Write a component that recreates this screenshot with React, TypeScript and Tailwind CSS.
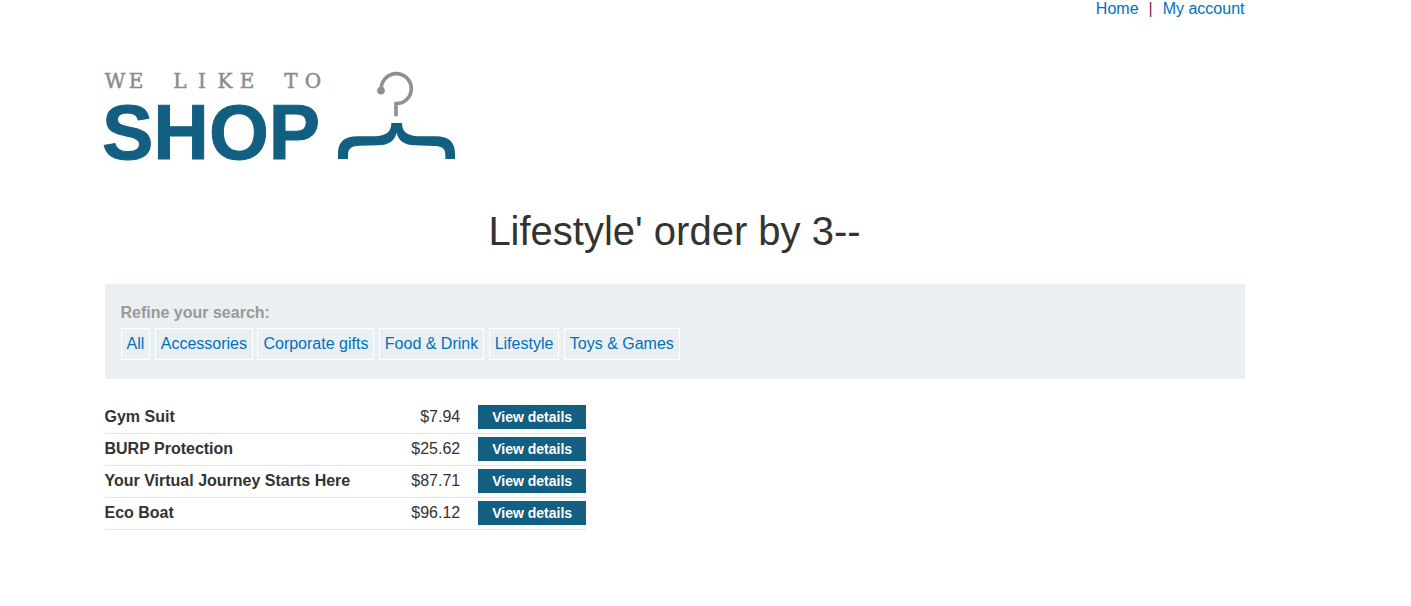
interface Product {
  name: string;
  price: string;
}

const categories = ["All", "Accessories", "Corporate gifts", "Food & Drink", "Lifestyle", "Toys & Games"];

const products: Product[] = [
  { name: "Gym Suit", price: "$7.94" },
  { name: "BURP Protection", price: "$25.62" },
  { name: "Your Virtual Journey Starts Here", price: "$87.71" },
  { name: "Eco Boat", price: "$96.12" },
];

function Logo() {
  return (
    <svg width="352" height="92" viewBox="0 0 352 92" overflow="visible" role="img" aria-label="We like to shop">
      <text
        x="10 31 75 97 120 142 186 208"
        y="18"
        textAnchor="middle"
        fontFamily="'DejaVu Serif', serif"
        fontSize="20"
        fill="#8c8c8c"
        stroke="#8c8c8c"
        strokeWidth="0.5"
      >
        WELIKETO
      </text>
      <text
        x="-3"
        y="89"
        fontFamily="'Liberation Sans', Arial, sans-serif"
        fontSize="77"
        fontWeight="bold"
        fill="#125f82"
        stroke="#125f82"
        strokeWidth="1"
      >
        SHOP
      </text>
      <g transform="translate(220 -10) scale(0.33333)">
        <path d="M169 90A45 45 0 1 1 213 131V169" fill="none" stroke="#8f9091" strokeWidth="11" />
        <circle cx="168" cy="92" r="11.5" fill="#8f9091" />
        <path
          d="M39 297V280C39 245 60 229 97 229H140C178 229 199 220 199 189H231C231 220 252 229 290 229H332C369 229 390 245 390 280V297H361V285C361 264 350 258 325 258L270 256C238 255 220 242 215 218C209 242 192 255 160 256L105 257C80 258 69 264 69 285V297Z"
          fill="#125f82"
        />
      </g>
    </svg>
  );
}

export default function App() {
  return (
    <div className="bg-white pr-[62px] font-['Liberation_Sans',Arial,sans-serif] text-base text-[#333332]">
      <div className="mx-auto max-w-[1140px]">
        <nav className="flex justify-end gap-[10px] leading-[18px]">
          <a href="#home" className="text-[#0071bc]">Home</a>
          <span className="text-[#7a1f45]">|</span>
          <a href="#account" className="text-[#0071bc]">My account</a>
        </nav>

        <header className="pt-[52px]">
          <a href="#home" className="inline-block align-top">
            <Logo />
          </a>
        </header>

        <main>
          <h1 className="mt-[45px] text-center text-[40px] leading-[48px]">Lifestyle' order by 3--</h1>

          <section className="mt-[29px] bg-[#eaeff2] px-4 pt-[19px] pb-[19px]">
            <h2 className="leading-[20px] font-bold text-[#999999]">Refine your search:</h2>
            <div className="mt-[5px] leading-[32px]">
              {categories.map((category) => (
                <span key={category}>
                  <a
                    href="#filter"
                    className="inline-block border border-white px-[5px] align-top leading-[30px] text-[#0071bc]"
                  >
                    {category}
                  </a>{" "}
                </span>
              ))}
            </div>
          </section>

          <table className="mt-[22px] border-collapse">
            <tbody>
              {products.map((product) => (
                <tr key={product.name} className="h-[32px] border-b border-[#e4e4e4]">
                  <th scope="row" className="min-w-[256px] pr-4 text-left leading-[24px] font-bold">
                    {product.name}
                  </th>
                  <td className="min-w-[94px] text-right leading-[24px]">{product.price}</td>
                  <td className="pl-[18px]">
                    <a
                      href="#product"
                      className="block bg-[#125f82] px-[14px] text-center text-[14px] leading-[24px] font-bold text-white"
                    >
                      View details
                    </a>
                  </td>
                </tr>
              ))}
            </tbody>
          </table>
        </main>
      </div>
    </div>
  );
}
